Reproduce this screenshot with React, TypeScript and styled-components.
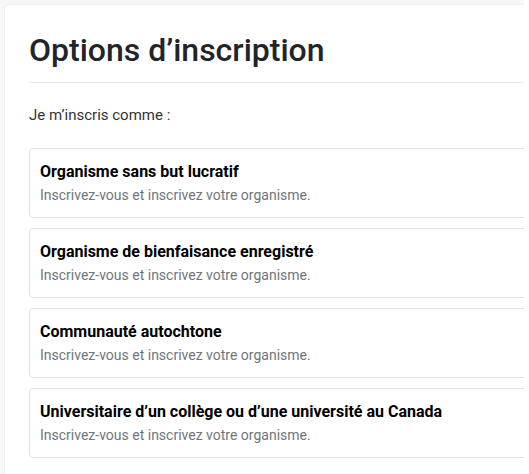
import React from "react";
import styled, { createGlobalStyle } from "styled-components";

const GlobalStyle = createGlobalStyle`
  html, body {
    margin: 0;
    padding: 0;
    background: #ffffff;
    overflow: hidden;
  }
  body {
    font-family: Roboto, "Liberation Sans", Arial, sans-serif;
  }
`;

const options = [
  "Organisme sans but lucratif",
  "Organisme de bienfaisance enregistré",
  "Communauté autochtone",
  "Universitaire d’un collège ou d’une université au Canada",
];

const App = () => {
  return (
    <>
      <GlobalStyle />
      <Viewport>
        <Panel>
          <Title>Options d’inscription</Title>
          <Divider />
          <Lead>Je m’inscris comme :</Lead>
          <OptionList>
            {options.map((name) => (
              <OptionCard key={name}>
                <OptionTitle>{name}</OptionTitle>
                <OptionText>Inscrivez-vous et inscrivez votre organisme.</OptionText>
              </OptionCard>
            ))}
          </OptionList>
        </Panel>
      </Viewport>
    </>
  );
};

export default App;

const Viewport = styled.div`
  width: 524px;
  height: 474px;
  box-sizing: border-box;
  padding: 4px 0 0 4px;
  background: #f7f7f7;
  overflow: hidden;
`;

const Panel = styled.div`
  width: 620px;
  min-height: 480px;
  box-sizing: border-box;
  background: #ffffff;
  border: 1px solid #efefef;
  border-radius: 6px;
  padding: 25px 24px 24px 24px;
`;

const Title = styled.h1`
  margin: 0;
  font-size: 32px;
  line-height: 40px;
  font-weight: 500;
  color: #212529;
`;

const Divider = styled.hr`
  margin: 12px 0 0 0;
  border: 0;
  border-top: 1px solid #e6e8e9;
`;

const Lead = styled.p`
  margin: 22px 0 0 0;
  font-size: 15px;
  line-height: 20px;
  color: #333333;
`;

const OptionList = styled.div`
  display: flex;
  flex-direction: column;
  gap: 10px;
  margin-top: 23px;
`;

const OptionCard = styled.div`
  box-sizing: border-box;
  height: 70px;
  border: 1px solid #dfe3e5;
  border-radius: 4px;
  padding: 13px 10px;
  cursor: pointer;
`;

const OptionTitle = styled.div`
  font-size: 16px;
  line-height: 20px;
  font-weight: 700;
  color: #000000;
`;

const OptionText = styled.div`
  margin-top: 3px;
  font-size: 14px;
  line-height: 20px;
  color: #70757a;
`;
